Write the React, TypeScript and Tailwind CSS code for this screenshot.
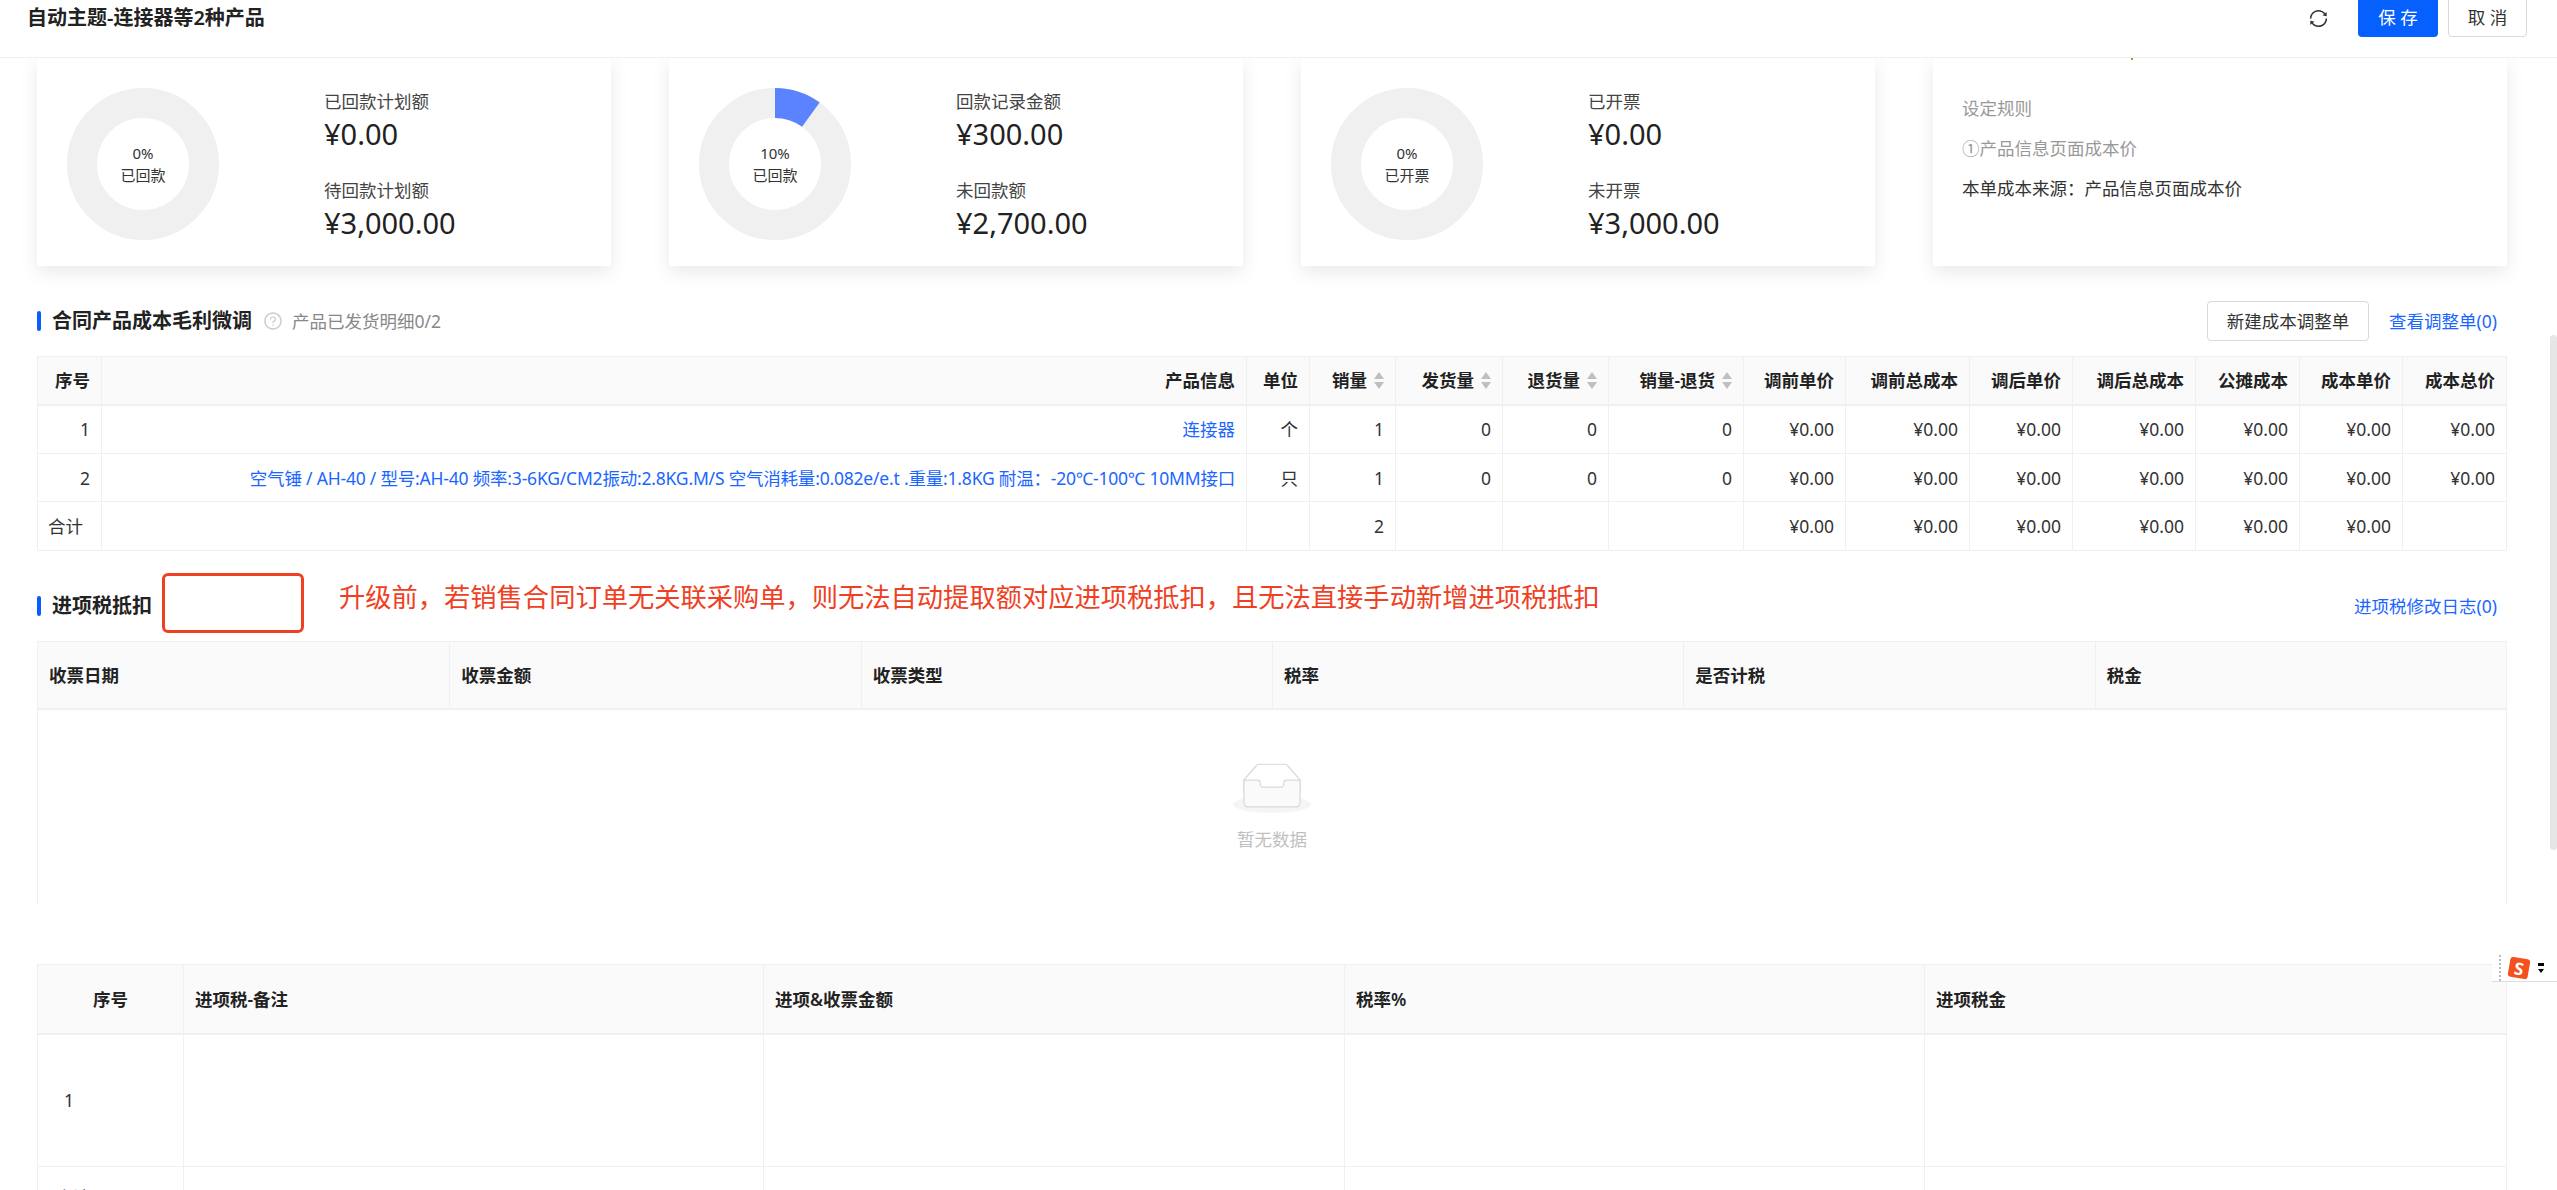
import { AiOutlineQuestionCircle, AiOutlineSync } from 'react-icons/ai';

const cards = [
  { pct: '0%', name: '已回款', wedge: false, a: '已回款计划额', av: '¥0.00', b: '待回款计划额', bv: '¥3,000.00' },
  { pct: '10%', name: '已回款', wedge: true, a: '回款记录金额', av: '¥300.00', b: '未回款额', bv: '¥2,700.00' },
  { pct: '0%', name: '已开票', wedge: false, a: '已开票', av: '¥0.00', b: '未开票', bv: '¥3,000.00' },
];

const zero = '¥0.00';
const costHeads = ['调前单价', '调前总成本', '调后单价', '调后总成本', '公摊成本', '成本单价', '成本总价'];

function Donut({ pct, name, wedge }: { pct: string; name: string; wedge: boolean }) {
  return (
    <div className="relative w-[152px] h-[152px] shrink-0">
      <svg width="152" height="152" viewBox="0 0 152 152">
        <circle cx="76" cy="76" r="61" fill="none" stroke="#f0f0f0" strokeWidth="30" />
        {wedge && <path d="M76 0A76 76 0 0 1 120.67 14.51L103.04 38.79A46 46 0 0 0 76 30Z" fill="#5b82ff" />}
      </svg>
      <div className="absolute inset-0 flex flex-col items-center justify-center text-[15px] leading-[22px] text-[#333]">
        <span>{pct}</span>
        <span>{name}</span>
      </div>
    </div>
  );
}

function StatCard({ card }: { card: (typeof cards)[number] }) {
  return (
    <div className="flex items-center pl-[30px] pt-[4px] bg-white shadow-[0_6px_18px_rgba(0,0,0,0.09)]">
      <Donut pct={card.pct} name={card.name} wedge={card.wedge} />
      <div className="ml-[105px] flex flex-col">
        <span className="text-[17.5px] leading-[26px] text-[#444]">{card.a}</span>
        <span className="mt-[3px] text-[29px] leading-[34px] text-[#222]">{card.av}</span>
        <span className="mt-[26px] text-[17.5px] leading-[26px] text-[#444]">{card.b}</span>
        <span className="mt-[3px] text-[29px] leading-[34px] text-[#222]">{card.bv}</span>
      </div>
    </div>
  );
}

function SectionTitle({ children }: { children: string }) {
  return (
    <div className="flex items-center gap-[11px]">
      <span className="w-[4px] h-[20px] rounded-[2px] bg-[#0a5cff]" />
      <span className="text-[20px] leading-[28px] font-semibold text-[#222]">{children}</span>
    </div>
  );
}

function SortHead({ label }: { label: string }) {
  return (
    <div className="flex items-center justify-end gap-[7px]">
      <span>{label}</span>
      <span className="flex flex-col gap-[3px]">
        <span className="w-0 h-0 border-x-[5px] border-x-transparent border-b-[7px] border-b-[#bfbfbf]" />
        <span className="w-0 h-0 border-x-[5px] border-x-transparent border-t-[7px] border-t-[#bfbfbf]" />
      </span>
    </div>
  );
}

function CostTable() {
  const th = 'border border-[#f0f0f0] border-b-2 bg-[#fafafa] px-[11px] text-right font-semibold text-[#222]';
  const td = 'border border-[#f0f0f0] px-[11px] text-right';
  return (
    <table className="w-full table-fixed border-collapse text-[17.5px] leading-[24px] text-[#333]">
      <colgroup>
        <col className="w-[64px]" />
        <col />
        <col className="w-[63px]" />
        <col className="w-[86px]" />
        <col className="w-[107px]" />
        <col className="w-[106px]" />
        <col className="w-[135px]" />
        <col className="w-[102px]" />
        <col className="w-[124px]" />
        <col className="w-[103px]" />
        <col className="w-[123px]" />
        <col className="w-[104px]" />
        <col className="w-[103px]" />
        <col className="w-[104px]" />
      </colgroup>
      <thead>
        <tr className="h-[48px]">
          <th className={th}>序号</th>
          <th className={th}>产品信息</th>
          <th className={th}>单位</th>
          <th className={th}><SortHead label="销量" /></th>
          <th className={th}><SortHead label="发货量" /></th>
          <th className={th}><SortHead label="退货量" /></th>
          <th className={th}><SortHead label="销量-退货" /></th>
          {costHeads.map((h) => (
            <th key={h} className={th}>{h}</th>
          ))}
        </tr>
      </thead>
      <tbody>
        <tr className="h-[49px]">
          <td className={td}>1</td>
          <td className={td}><a className="text-[#1a66ff]">连接器</a></td>
          <td className={td}>个</td>
          <td className={td}>1</td>
          <td className={td}>0</td>
          <td className={td}>0</td>
          <td className={td}>0</td>
          {costHeads.map((h) => (
            <td key={h} className={td}>{zero}</td>
          ))}
        </tr>
        <tr className="h-[48px]">
          <td className={td}>2</td>
          <td className={td}>
            <a className="text-[#1a66ff] whitespace-nowrap tracking-[-0.2px]">
              空气锤 / AH-40 / 型号:AH-40 频率:3-6KG/CM2振动:2.8KG.M/S 空气消耗量:0.082e/e.t .重量:1.8KG 耐温：-20℃-100℃ 10MM接口
            </a>
          </td>
          <td className={td}>只</td>
          <td className={td}>1</td>
          <td className={td}>0</td>
          <td className={td}>0</td>
          <td className={td}>0</td>
          {costHeads.map((h) => (
            <td key={h} className={td}>{zero}</td>
          ))}
        </tr>
        <tr className="h-[49px]">
          <td className="border border-[#f0f0f0] pl-[10px] text-left">合计</td>
          <td className={td} />
          <td className={td} />
          <td className={td}>2</td>
          <td className={td} />
          <td className={td} />
          <td className={td} />
          {costHeads.map((h, i) => (
            <td key={h} className={td}>{i < 6 ? zero : ''}</td>
          ))}
        </tr>
      </tbody>
    </table>
  );
}

function EmptyIcon() {
  return (
    <svg width="78" height="50" viewBox="0 0 64 41">
      <g transform="translate(0 1)" fill="none" fillRule="evenodd">
        <ellipse fill="#f5f5f5" cx="32" cy="33" rx="32" ry="7" />
        <g fillRule="nonzero" stroke="#d9d9d9">
          <path d="M55 12.76L44.854 1.258C44.367.474 43.656 0 42.907 0H21.093c-.749 0-1.46.474-1.947 1.257L9 12.761V22h46v-9.24z" />
          <path
            d="M41.613 15.931c0-1.605.994-2.93 2.227-2.931H55v18.137C55 33.26 53.68 35 52.05 35h-40.1C10.32 35 9 33.259 9 31.137V13h11.16c1.233 0 2.227 1.323 2.227 2.928v.022c0 1.605 1.005 2.901 2.237 2.901h14.752c1.232 0 2.237-1.308 2.237-2.913v-.007z"
            fill="#fafafa"
          />
        </g>
      </g>
    </svg>
  );
}

function InvoiceTable() {
  const heads = ['收票日期', '收票金额', '收票类型', '税率', '是否计税', '税金'];
  return (
    <div className="border-x border-[#f0f0f0] text-[17.5px] leading-[24px]">
      <div className="grid grid-cols-6 h-[69px] border-y border-t-[#f0f0f0] border-b-2 border-b-[#f0f0f0] bg-[#fafafa]">
        {heads.map((h, i) => (
          <div key={h} className={'flex items-center px-[11px] font-semibold text-[#222] ' + (i > 0 ? 'border-l border-[#f0f0f0]' : '')}>
            {h}
          </div>
        ))}
      </div>
      <div className="h-[194px] pt-[53px] flex flex-col items-center">
        <EmptyIcon />
        <span className="mt-[13px] leading-[26px] text-[#bfbfbf]">暂无数据</span>
      </div>
    </div>
  );
}

function TaxTable() {
  const th = 'border border-[#f0f0f0] border-b-2 bg-[#fafafa] px-[11px] font-semibold text-[#222]';
  const td = 'border border-[#f0f0f0] px-[11px]';
  return (
    <table className="w-full table-fixed border-collapse text-[17.5px] leading-[24px] text-[#333]">
      <colgroup>
        <col className="w-[146px]" />
        <col className="w-[580px]" />
        <col className="w-[581px]" />
        <col className="w-[580px]" />
        <col />
      </colgroup>
      <thead>
        <tr className="h-[69px]">
          <th className={th + ' text-center'}>序号</th>
          <th className={th + ' text-left'}>进项税-备注</th>
          <th className={th + ' text-left'}>进项&收票金额</th>
          <th className={th + ' text-left'}>税率%</th>
          <th className={th + ' text-left'}>进项税金</th>
        </tr>
      </thead>
      <tbody>
        <tr className="h-[133px]">
          <td className="border border-[#f0f0f0] pl-[26px]">1</td>
          <td className={td} />
          <td className={td} />
          <td className={td} />
          <td className={td} />
        </tr>
        <tr className="h-[60px]">
          <td className="border border-[#f0f0f0] pl-[17px]">合计</td>
          <td className={td} />
          <td className={td} />
          <td className={td} />
          <td className={td} />
        </tr>
      </tbody>
    </table>
  );
}

export default function App() {
  return (
    <div className="relative flex flex-col h-[1190px] overflow-hidden bg-white text-[17.5px] text-[#333] [font-family:'Noto_Sans','Noto_Sans_CJK_SC',sans-serif]">
      <header className="relative z-10 flex items-start justify-between shrink-0 h-[58px] pl-[27px] pr-[30px] border-b border-[#f0f0f0] bg-white">
        <h1 className="mt-[5px] text-[20px] leading-[26px] font-semibold text-[#222]">自动主题-连接器等2种产品</h1>
        <div className="flex items-start">
          <AiOutlineSync className="mt-[8px] mr-[29px] text-[#333]" size={21} />
          <button className="-mt-[3px] h-[40px] w-[80px] rounded-[4px] bg-[#0560fd] text-white">保 存</button>
          <button className="-mt-[3px] ml-[10px] h-[40px] w-[79px] rounded-[4px] border border-[#d9d9d9] bg-white text-[#333]">取 消</button>
        </div>
      </header>

      <main className="flex flex-col pl-[37px] pr-[50px]">
        <div className="grid grid-cols-4 gap-[58px] h-[208px]">
          {cards.map((c) => (
            <StatCard key={c.a} card={c} />
          ))}
          <div className="relative flex flex-col pl-[29px] pt-[37px] gap-[14px] bg-white shadow-[0_6px_18px_rgba(0,0,0,0.09)] leading-[26px]">
            <span className="absolute left-[198px] top-0 w-[2px] h-[2px] bg-[#c98a3a]" />
            <span className="text-[#999]">设定规则</span>
            <span className="text-[#999]">①产品信息页面成本价</span>
            <span>本单成本来源：产品信息页面成本价</span>
          </div>
        </div>

        <div className="flex items-center h-[40px] mt-[35px]">
          <SectionTitle>合同产品成本毛利微调</SectionTitle>
          <AiOutlineQuestionCircle className="ml-[11px] text-[#ccc]" size={20} />
          <span className="ml-[9px] text-[#888]">产品已发货明细0/2</span>
          <button className="ml-auto h-[40px] w-[162px] rounded-[4px] border border-[#d9d9d9] text-[#333]">新建成本调整单</button>
          <a className="ml-[20px] mr-[10px] text-[#1a66ff]">查看调整单(0)</a>
        </div>

        <div className="mt-[15px]">
          <CostTable />
        </div>

        <div className="relative flex items-center h-[59px] mt-[22px] pt-[7px]">
          <SectionTitle>进项税抵扣</SectionTitle>
          <a className="ml-auto mr-[10px] text-[#1a66ff]">进项税修改日志(0)</a>
          <div className="absolute left-[125px] top-0 w-[142px] h-[60px] rounded-[6px] border-[3px] border-[#ee4124]" />
          <span className="absolute left-[302px] top-[6px] text-[26.27px] leading-[36px] whitespace-nowrap text-[#ee4124]">
            升级前，若销售合同订单无关联采购单，则无法自动提取额对应进项税抵扣，且无法直接手动新增进项税抵扣
          </span>
        </div>

        <div className="mt-[9px]">
          <InvoiceTable />
        </div>

        <div className="mt-[60px]">
          <TaxTable />
        </div>
      </main>

      {/* page scrollbar thumb */}
      <div className="absolute right-0 top-[335px] w-[7px] h-[515px] rounded-[4px] bg-[#e6e6e6]" />

      {/* input method toolbar floating over the page */}
      <div className="absolute left-[2492px] top-[955px] z-20 flex items-center w-[65px] h-[27px] bg-white border-b border-[#ddd]">
        <span className="ml-[7px] h-full border-l-2 border-dotted border-[#bbb]" />
        <span className="ml-[8px] flex items-center justify-center w-[20px] h-[20px] rotate-[10deg] rounded-[3px] bg-[#f4511e] text-[17px] leading-none font-bold text-white">S</span>
        <span className="ml-[9px] flex flex-col items-center gap-[3px]">
          <span className="w-[6px] h-[3px] bg-black" />
          <span className="w-0 h-0 border-x-[3px] border-x-transparent border-t-[4px] border-t-black" />
        </span>
      </div>
    </div>
  );
}
